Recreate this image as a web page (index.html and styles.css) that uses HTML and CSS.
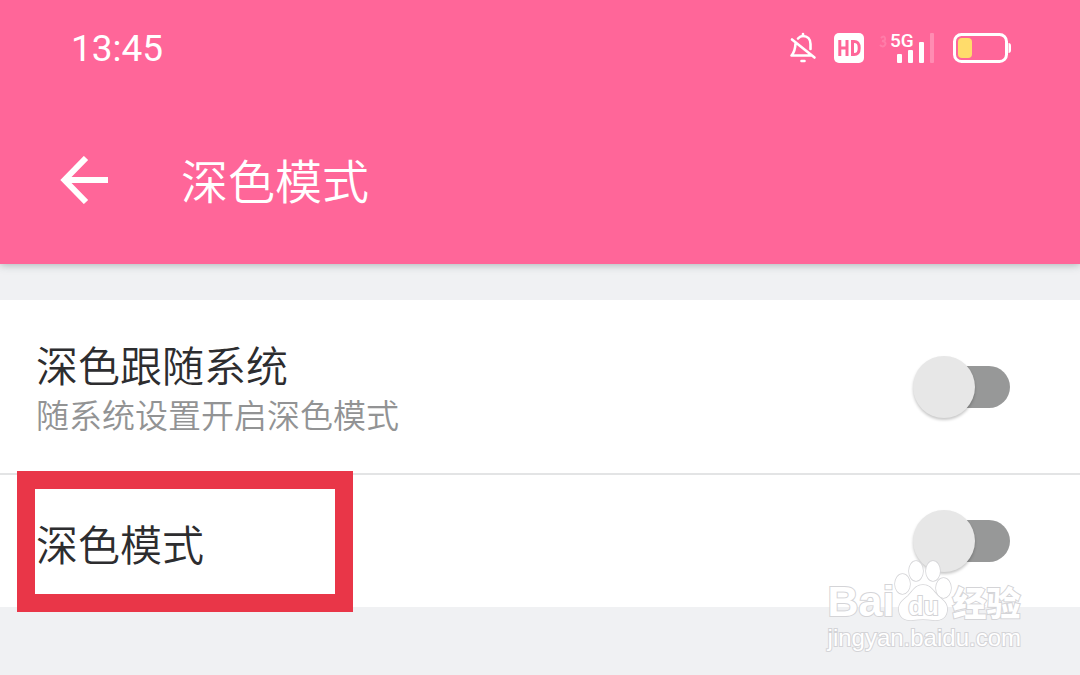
FILE: index.html
```html
<!DOCTYPE html>
<html lang="zh-CN">
<head>
<meta charset="utf-8">
<meta name="viewport" content="width=device-width, initial-scale=1">
<title>深色模式</title>
<link rel="stylesheet" href="styles.css">
</head>
<body>
<header class="header">
  <div class="status">
    <time class="clock">13:45</time>
    <div class="status-icons">
      <svg class="bell" width="28" height="32" viewBox="0 0 28 32" fill="none" stroke="#fff" stroke-width="2.600" stroke-linecap="round" stroke-linejoin="round">
        <path d="M9 6.500C10.500 4.800 12 4 14 4c4.500 0 7.500 3.200 7.500 8v5"/>
        <path d="M14 2v2M6.500 11.500c-.2 5-1 8.500-4 12h19M3 7.500l22.500 18M12.500 29h3"/>
      </svg>
      <svg class="hd" width="30" height="30" viewBox="0 0 30 30">
        <rect width="30" height="30" rx="5" fill="#fff"/>
        <path d="M5.800 7v16M13 7v16M5.800 15H13M18.500 8.500v13h1.500c4 0 5.200-2 5.200-6.500s-1.200-6.500-5.200-6.500z" fill="none" stroke="#ff6699" stroke-width="3"/>
      </svg>
      <div class="network">
        <span class="network-label">5G</span>
        <svg width="56" height="32" viewBox="0 0 56 32" fill="#fff">
          <path d="M2 6q3-3 4 0t-3 3q5 1 3 4t-5 0" fill="none" stroke="#fff" stroke-width="2" opacity=".15"/>
          <rect x="18" y="22" width="5" height="9" rx="1"/>
          <rect x="29" y="18" width="5" height="13" rx="1"/>
          <rect x="40" y="10" width="5" height="21" rx="1"/>
          <rect x="51" y="1" width="4" height="30" rx="1" opacity=".25"/>
        </svg>
      </div>
      <svg class="battery" width="59" height="30" viewBox="0 0 59 30">
        <rect x="1.500" y="1.500" width="52" height="27" rx="7" fill="none" stroke="#fff" stroke-width="3"/>
        <rect x="5" y="5" width="14" height="20" rx="4" fill="#ffdc6b"/>
        <path d="M55.500 10q2.500 0 2.500 3v4q0 3-2.500 3z" fill="#fff"/>
      </svg>
    </div>
  </div>
  <div class="appbar">
    <button class="back" type="button" aria-label="返回">
      <svg width="48" height="48" viewBox="0 0 48 48" fill="none" stroke="#fff" stroke-width="6"><path d="M48 24H5M26 2L4.500 24 26 46"/></svg>
    </button>
    <h1 class="title">深色模式</h1>
  </div>
</header>
<main class="settings">
  <div class="row row-follow">
    <label class="row-text" for="follow">
      <span class="row-title">深色跟随系统</span>
      <span class="row-note">随系统设置开启深色模式</span>
    </label>
    <input class="switch" id="follow" type="checkbox" role="switch">
  </div>
  <div class="row row-dark">
    <label class="row-text" for="dark"><span class="row-title">深色模式</span></label>
    <input class="switch" id="dark" type="checkbox" role="switch">
    <div class="highlight"></div>
    <div class="watermark">
      <div class="brand">
        <span class="brand-name">Bai</span>
        <span class="paw">
          <svg width="58" height="62" viewBox="0 0 58 62" fill="#fff" stroke="#d4d4d7" stroke-width="1.500">
            <ellipse cx="8.500" cy="24" rx="7.500" ry="10"/><ellipse cx="22" cy="11" rx="7" ry="10"/><ellipse cx="39" cy="11" rx="7" ry="10"/><ellipse cx="49.500" cy="28" rx="7.500" ry="10"/>
            <path d="M29 25c-8 0-10 6-15 11-6 5-10 8-9 15 1 8 8 10 14 9 7-1 13-1 20 0 6 1 13-1 14-9 1-7-3-10-9-15-5-5-7-11-15-11z"/>
          </svg>
          <span class="paw-text">du</span>
        </span>
        <span class="brand-cn">经验</span>
      </div>
      <div class="site">jingyan.baidu.com</div>
    </div>
  </div>
</main>
</body>
</html>
```
FILE: styles.css
```css
* { box-sizing: border-box; }

body {
  margin: 0;
  min-height: 100vh;
  background: #f0f1f3;
  color: #2d2d2f;
  font-family: "Noto Sans CJK SC", sans-serif;
  font-weight: 350;
}

.header {
  position: relative;
  background: #ff6699;
  color: #fff;
  box-shadow: 0 1px 8px rgba(40, 70, 70, .35);
}

.status {
  display: flex;
  align-items: center;
  justify-content: space-between;
  height: 96px;
  padding: 0 68px 0 71px;
}

.clock {
  padding-top: 2px;
  font: 400 37px/48px Roboto, sans-serif;
}

.status-icons { display: flex; align-items: center; }
.hd { margin-left: 17px; }
.network { position: relative; height: 32px; margin-left: 15px; }
.network svg { display: block; }
.battery { margin-left: 18px; }

.network-label {
  position: absolute;
  top: -1px;
  left: 11px;
  font: 500 19px/20px Roboto, sans-serif;
}

.appbar {
  display: flex;
  align-items: center;
  gap: 73px;
  height: 168px;
  padding: 0 60px;
}

.back {
  display: flex;
  padding: 0;
  border: 0;
  background: none;
}

.title {
  margin: 0;
  padding-bottom: 2px;
  font-size: 47px;
  line-height: 64px;
  font-weight: 350;
}

.settings { margin-top: 36px; background: #fff; }

.row {
  position: relative;
  display: flex;
  align-items: center;
  justify-content: space-between;
  padding: 0 70px 0 36px;
}

.row-follow {
  min-height: 175px;
  border-bottom: 2px solid #e3e4e5;
}

.row-dark { min-height: 132px; }

.row-text { display: flex; flex-direction: column; padding-top: 4px; }
.row-title { font-size: 42px; line-height: 50px; }
.row-note { font-size: 33px; line-height: 50px; color: #929394; }

.switch {
  appearance: none;
  position: relative;
  width: 97px;
  height: 62px;
  margin: 0;
}

.switch::before {
  content: "";
  position: absolute;
  inset: 10px 0 10px 14px;
  border-radius: 21px;
  background: #979898;
}

.switch::after {
  content: "";
  position: absolute;
  top: 0;
  left: 0;
  width: 62px;
  height: 62px;
  border-radius: 50%;
  background: #e7e7e7;
  box-shadow: 0 2px 3px rgba(0, 0, 0, .22);
}

.switch:checked::after { left: auto; right: 0; }

.highlight {
  position: absolute;
  top: -4px;
  left: 17px;
  width: 336px;
  height: 141px;
  border: 18px solid #e93648;
  pointer-events: none;
}

.watermark {
  position: absolute;
  top: 85px;
  right: 59px;
  color: #fff;
  font-family: "Liberation Sans", "Noto Sans CJK SC", sans-serif;
  font-weight: 700;
  -webkit-text-stroke: 2px #d4d4d7;
  paint-order: stroke fill;
  pointer-events: none;
}

.brand { display: flex; align-items: flex-end; height: 62px; }
.brand-name { font-size: 43px; line-height: 42px; }
.brand-cn { font: 900 34px/40px "Noto Sans CJK SC", sans-serif; }
.paw { position: relative; height: 62px; }
.paw svg { display: block; }

.paw-text {
  position: absolute;
  right: 0;
  bottom: 2px;
  left: 0;
  font-size: 25px;
  line-height: 28px;
  text-align: center;
}

.site {
  font-size: 24px;
  line-height: 32px;
  font-weight: 400;
}
```
